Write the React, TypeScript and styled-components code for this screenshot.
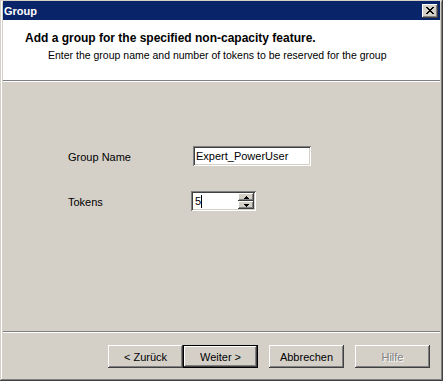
import styled, { createGlobalStyle } from "styled-components";

const GlobalStyle = createGlobalStyle`
  html, body {
    margin: 0;
    padding: 0;
    background: #d4d0c8;
  }
  body {
    font-family: "Liberation Sans", Arial, sans-serif;
    font-size: 11px;
    color: #000;
  }
`;

const Frame = styled.div`
  box-sizing: border-box;
  width: 443px;
  height: 381px;
  display: flex;
  flex-direction: column;
  padding: 1px 3px 3px 3px;
  background: #d4d0c8;
  box-shadow: inset -1px -1px #404040, inset 1px 1px #d4d0c8,
    inset -2px -2px #808080, inset 2px 2px #ffffff;
  overflow: hidden;
`;

const TitleBar = styled.div`
  height: 19px;
  flex: none;
  display: flex;
  align-items: center;
  justify-content: space-between;
  padding: 0 2px 0 1px;
  background: #0a246a;
`;

const Title = styled.span`
  color: #fff;
  font-weight: bold;
  font-size: 11px;
`;

const CloseButton = styled.div`
  box-sizing: border-box;
  width: 16px;
  height: 14px;
  display: flex;
  align-items: center;
  justify-content: center;
  background: #d4d0c8;
  box-shadow: inset -1px -1px #404040, inset 1px 1px #ffffff,
    inset -2px -2px #808080;
`;

const Header = styled.div`
  height: 60px;
  flex: none;
  box-sizing: border-box;
  background: #fff;
  padding: 11px 0 0 22px;
`;

const Heading = styled.div`
  font-weight: bold;
  font-size: 12px;
  line-height: 14px;
`;

const SubTitle = styled.div`
  font-size: 10.5px;
  line-height: 13px;
  margin: 4px 0 0 23px;
`;

const Separator = styled.div`
  height: 1px;
  flex: none;
  background: #808080;
  border-bottom: 1px solid #fff;
`;

const Body = styled.div`
  flex: 1;
  display: grid;
  grid-template-columns: 125px auto;
  grid-auto-rows: 20px;
  row-gap: 25px;
  align-content: start;
  align-items: center;
  padding: 64px 0 0 65px;
`;

const Label = styled.span`
  font-size: 11px;
  padding-top: 1px;
`;

const sunken = `
  box-sizing: border-box;
  background: #fff;
  box-shadow: inset 1px 1px #808080, inset -1px -1px #ffffff,
    inset 2px 2px #404040, inset -2px -2px #d4d0c8;
`;

const TextInput = styled.div`
  ${sunken}
  width: 118px;
  height: 20px;
  padding: 0 3px;
  display: flex;
  align-items: center;
  font-size: 11px;
`;

const Spinner = styled.div`
  ${sunken}
  width: 65px;
  height: 20px;
  margin-left: -2px;
  padding: 2px 2px 2px 4px;
  display: flex;
  align-items: center;
  font-size: 11px;
`;

const Caret = styled.span`
  display: inline-block;
  width: 1px;
  height: 13px;
  background: #000;
`;

const SpinValue = styled.div`
  flex: 1;
  display: flex;
  align-items: center;
`;

const SpinButtons = styled.div`
  width: 16px;
  height: 16px;
  display: flex;
  flex-direction: column;
`;

const SpinButton = styled.div`
  box-sizing: border-box;
  flex: 1;
  display: flex;
  align-items: center;
  justify-content: center;
  background: #d4d0c8;
  box-shadow: inset -1px -1px #404040, inset 1px 1px #ffffff,
    inset -2px -2px #808080;
`;

const Footer = styled.div`
  height: 45px;
  flex: none;
  box-sizing: border-box;
  display: flex;
  justify-content: flex-end;
  align-items: flex-start;
  padding: 12px 10px 0 0;
`;

const Button = styled.div<{ $default?: boolean; $disabled?: boolean; $gap?: number }>`
  box-sizing: border-box;
  width: 75px;
  height: 23px;
  margin-left: ${(p) => p.$gap ?? 0}px;
  display: flex;
  align-items: center;
  justify-content: center;
  background: #d4d0c8;
  font-size: 11px;
  color: ${(p) => (p.$disabled ? "#808080" : "#000")};
  text-shadow: ${(p) => (p.$disabled ? "1px 1px #fff" : "none")};
  box-shadow: ${(p) =>
    p.$default
      ? "inset 0 0 0 1px #000, inset -2px -2px #404040, inset 2px 2px #ffffff, inset -3px -3px #808080"
      : "inset -1px -1px #404040, inset 1px 1px #ffffff, inset -2px -2px #808080"};
`;

const CloseGlyph = () => (
  <svg width="8" height="7" viewBox="0 0 8 7" shapeRendering="crispEdges">
    <path
      d="M0 0h2v1H0zM6 0h2v1H6zM1 1h2v1H1zM5 1h2v1H5zM2 2h4v1H2zM3 3h2v1H3zM2 4h4v1H2zM1 5h2v1H1zM5 5h2v1H5zM0 6h2v1H0zM6 6h2v1H6z"
      fill="#000"
    />
  </svg>
);

const Arrow = ({ up }: { up?: boolean }) => (
  <svg width="5" height="3" viewBox="0 0 5 3" shapeRendering="crispEdges">
    <path d={up ? "M2 0h1v1H2zM1 1h3v1H1zM0 2h5v1H0z" : "M0 0h5v1H0zM1 1h3v1H1zM2 2h1v1H2z"} fill="#000" />
  </svg>
);

const App = () => {
  return (
    <>
      <GlobalStyle />
      <Frame>
        <TitleBar>
          <Title>Group</Title>
          <CloseButton>
            <CloseGlyph />
          </CloseButton>
        </TitleBar>
        <Header>
          <Heading>Add a group for the specified non-capacity feature.</Heading>
          <SubTitle>Enter the group name and number of tokens to be reserved for the group</SubTitle>
        </Header>
        <Separator />
        <Body>
          <Label>Group Name</Label>
          <TextInput>Expert_PowerUser</TextInput>
          <Label>Tokens</Label>
          <Spinner>
            <SpinValue>
              5<Caret />
            </SpinValue>
            <SpinButtons>
              <SpinButton>
                <Arrow up />
              </SpinButton>
              <SpinButton>
                <Arrow />
              </SpinButton>
            </SpinButtons>
          </Spinner>
        </Body>
        <Separator />
        <Footer>
          <Button>&lt; Zurück</Button>
          <Button $default>Weiter &gt;</Button>
          <Button $gap={11}>Abbrechen</Button>
          <Button $gap={11} $disabled>
            Hilfe
          </Button>
        </Footer>
      </Frame>
    </>
  );
};

export default App;
